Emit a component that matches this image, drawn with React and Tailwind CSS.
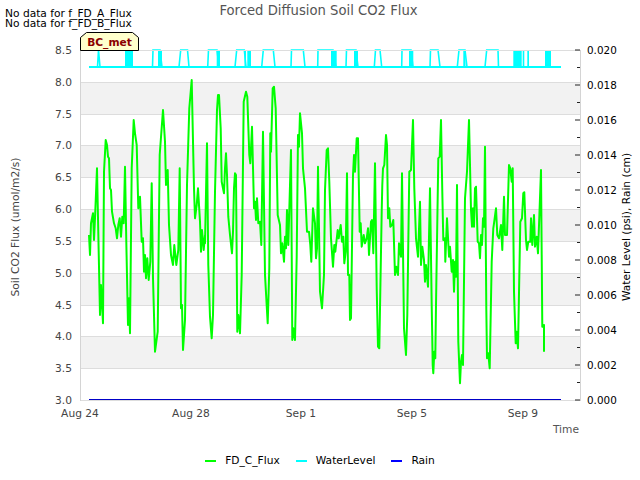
import React from "react";

// traced from the plot, each run is [left x, pairs of crop x / crop y at 3x]
const fluxRuns = [
  [85, [12,480,15,540,18,445,24,415,27,495,30,430,36,280,39,430,45,720,48,630,54,745,57,290,62,195,66,210,69,245,72,250,75,340,78,345,81,410,87,445,92,460,96,490,100,450,104,430,108,485,112,425,116,445,120,275,124,500,129,750,132,670,135,775,140,280,146,135,150,175,155,210,160,400,165,365,170,500,174,490,177,590,180,540,183,610,187,550,191,615,196,560,200,325,204,610,210,830,218,770,224,240,234,105,240,200,243,330,248,285,252,450,258,540,264,570,268,510,274,570,280,525,284,280,288,700,291,690,294,825,300,735,306,330,313,100,320,15,327,340,330,430,335,390,339,340,345,440,348,530,351,465,356,525,360,480]],
  [205, [0,505,6,205,10,570,15,725,20,790,24,720,30,350,36,105,39,60,42,60,47,160,50,320,57,355,60,280,63,235,66,300,70,425,75,480,81,535,84,470,87,340,90,295,93,300,97,770,100,720,105,775,110,600,116,80,123,50,127,65,133,240,136,265,141,155,147,400,150,380,153,435,156,370,160,445,165,440,169,510,174,170,180,600,188,745,193,580,196,175,198,230,203,40,207,35,212,100,218,420,225,450,228,535,232,505,237,560,240,485,243,520,246,405,250,510,253,405,258,225,262,795,265,760,270,795,275,545,279,180,282,215,285,115,291,175,294,280,300,340,306,470,312,470,316,510,319,560,324,400,330,445,333,550,336,520,339,275,345,650,351,700,357,600]],
  [325, [0,345,5,225,9,220,13,320,18,490,24,575,28,510,31,530,38,465,41,490,47,450,51,500,55,485,58,565,62,530,66,295,69,600,73,600,75,735,78,730,84,300,87,240,90,290,95,190,99,190,104,470,107,445,110,515,116,480,120,505,125,490,129,460,132,540,138,440,141,435,145,535,150,265,155,640,159,815,163,820,170,410,172,330,174,280,178,270,183,180,186,210,189,430,193,400,196,455,201,450,205,435,210,600,214,575,219,600,222,505,228,545,231,295,237,760,243,840,247,720,253,290,258,285,264,135,268,340,273,490,279,545,285,380,288,570,292,515,297,555,300,620,303,570,309,635,315,340,320,690,323,870,325,895,328,830,331,850,333,690,340,250,344,245,348,135,352,350,355,495]],
  [445, [0,490,1,560,6,430,12,545,15,515,20,590,24,555,27,650,30,560,33,605,36,330,40,800,45,925,48,860,51,840,54,870,60,370,66,290,72,135,78,405,81,455,84,400,87,455,90,340,93,335,98,500,102,505,105,550,108,480,111,510,114,430,117,455,120,215,124,700,126,850,130,835,134,880,140,560,145,460,147,445,153,400,157,480,162,490,168,450,172,525,177,365,180,480,186,480,192,270,196,280,200,320,203,280,207,650,212,805,215,770,219,820,226,440,231,430,235,355,238,352,243,495,246,525,250,500,256,500,258,430,262,510,267,420,270,515,275,485,279,535,288,285,292,755,297,750,297,830]],
];

const fluxPath = fluxRuns
  .flatMap(([left, pts]) => {
    const out = [];
    for (let i = 0; i < pts.length; i += 2) {
      out.push(`${(left + pts[i] / 3).toFixed(1)},${(75 + pts[i + 1] / 3).toFixed(1)}`);
    }
    return out;
  })
  .join(" ");

// up start, up end, down start, down end
const pulses = [
  [97.5, 98.5, 98.5, 100],
  [152.5, 153, 160, 162],
  [179, 180.7, 187.5, 189],
  [207.7, 208.5, 217, 219],
  [235, 236.7, 244.3, 246],
  [261.7, 263.3, 273.3, 275],
  [291, 291.5, 303.3, 305],
  [317.7, 318, 333, 336],
  [346, 346.5, 356, 358],
  [374.3, 375.5, 380, 381.7],
  [401.7, 402, 411, 413],
  [430, 430.5, 438, 440],
  [457.3, 459, 465, 467],
  [485, 486.7, 498, 498.5],
];

const blocks = [
  [125, 133],
  [158, 162],
  [216.7, 220],
  [244.5, 246],
  [247.3, 251],
  [331, 336.7],
  [354, 358],
  [409, 413.3],
  [463.3, 465.5],
  [513.3, 521.7],
  [522.7, 524.3],
  [527.3, 529],
  [545, 551],
];

const bands = [[82, 114], [145.5, 177.5], [209.5, 241.5], [273, 305.5], [336.5, 368.5]];
const grid = [50.5, 82.5, 114.5, 145.5, 177.5, 209.5, 241.5, 273.5, 305.5, 336.5, 368.5, 400.5];
const leftLabels = ["8.5", "8.0", "7.5", "7.0", "6.5", "6.0", "5.5", "5.0", "4.5", "4.0", "3.5", "3.0"];
const rightLabels = ["0.020", "0.018", "0.016", "0.014", "0.012", "0.010", "0.008", "0.006", "0.004", "0.002", "0.000"];
const dates = [["Aug 24", 80], ["Aug 28", 191], ["Sep 1", 301], ["Sep 5", 412], ["Sep 9", 523]];
const legend = [["FD_C_Flux", "bg-[#00ff00]"], ["WaterLevel", "bg-[#00ffff]"], ["Rain", "bg-[#0000ff]"]];

const waterPath = () => {
  let d = "M89 67";
  pulses.forEach(([a, b, c, e]) => {
    d += ` L${a} 67 L${b} 50 L${c} 50 L${e} 67`;
  });
  return d + " L561 67";
};

export default function App() {
  return (
    <div className="relative flex flex-col w-[640px] h-[480px] bg-white font-['DejaVu_Sans',sans-serif]">
      <div className="absolute left-[5px] top-[9px] text-[10.67px] leading-[10px] text-black">
        <p>No data for f_FD_A_Flux</p>
        <p>No data for f_FD_B_Flux</p>
      </div>

      <div className="flex justify-center items-center h-[22px] pr-[3px] text-[13.2px] text-[#555555]">
        Forced Diffusion Soil CO2 Flux
      </div>

      <svg width="640" height="418" viewBox="0 22 640 418" className="block">
        {bands.map(([a, b]) => (
          <rect key={a} x="81" y={a} width="499" height={b - a} fill="#f2f2f2" />
        ))}

        <path d={waterPath()} fill="none" stroke="#00ffff" strokeWidth="1.6" />
        <path d="M89 67 L561 67" stroke="#00ffff" strokeWidth="2" />
        {blocks.map(([a, b]) => (
          <rect key={a} x={a} y="50" width={b - a} height="17" fill="#00ffff" />
        ))}

        {grid.map((y) => (
          <line key={y} x1="80" x2="580" y1={y} y2={y} stroke="#dddddd" strokeWidth="1" />
        ))}
        <line x1="80.5" x2="80.5" y1="50" y2="401" stroke="#d4d4d4" />
        <line x1="580.5" x2="580.5" y1="50" y2="401" stroke="#d4d4d4" />

        <polyline points={fluxPath} fill="none" stroke="#00ff00" strokeWidth="2" strokeLinejoin="round" />
        <line x1="89" x2="561" y1="399.5" y2="399.5" stroke="#0000c8" strokeWidth="1" />

        {rightLabels.map((label, i) => (
          <g key={label}>
            <line x1="575" x2="580" y1={50 + i * 35} y2={50 + i * 35} stroke="#222222" />
            {i < 10 && <line x1="577" x2="580" y1={67.5 + i * 35} y2={67.5 + i * 35} stroke="#222222" />}
            <text x="587" y={53.5 + i * 35} className="text-[10.4px] fill-black">{label}</text>
          </g>
        ))}

        {leftLabels.map((label, i) => (
          <text key={label} x="72" y={grid[i] + 3} textAnchor="end" className="text-[10.67px] fill-[#444444]">
            {label}
          </text>
        ))}

        {dates.map(([label, x]) => (
          <text key={label} x={x} y="417" textAnchor="middle" className="text-[10.67px] fill-[#444444]">
            {label}
          </text>
        ))}
        <text x="579" y="433" textAnchor="end" className="text-[10.67px] fill-[#555555]">Time</text>

        <text transform="translate(19 227) rotate(-90)" textAnchor="middle" className="text-[10.67px] fill-[#444444]">
          Soil CO2 Flux (umol/m2/s)
        </text>
        <text transform="translate(630 227) rotate(-90)" textAnchor="middle" className="text-[10.67px] fill-black">
          Water Level (psi), Rain (cm)
        </text>

        <polygon
          points="80.5,50.5 80.5,37.5 86.5,32.5 132.5,32.5 138.5,37.5 138.5,50.5"
          fill="#ffffcc"
          stroke="#000000"
        />
        <text x="109.5" y="46" textAnchor="middle" className="text-[10.67px] font-bold fill-[#8b0000]">BC_met</text>
      </svg>

      <div className="flex justify-center items-center gap-4 mt-[14px] text-[10.67px] leading-[14px] text-black">
        {legend.map(([label, swatch]) => (
          <div key={label} className="flex items-center gap-[9px]">
            <span className={`w-[11px] h-[2px] ${swatch}`} />
            <span>{label}</span>
          </div>
        ))}
      </div>
    </div>
  );
}
